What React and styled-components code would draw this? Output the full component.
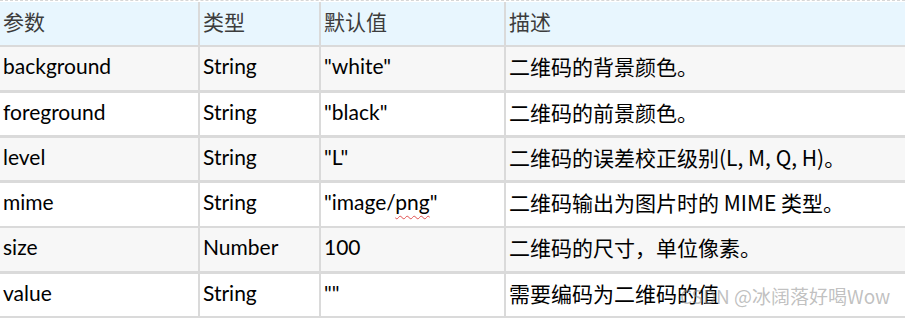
import styled, { createGlobalStyle } from "styled-components";

const GlobalStyle = createGlobalStyle`
  html, body {
    margin: 0;
    padding: 0;
    background: #ffffff;
  }
  body {
    font-family: Lato, "Noto Sans CJK SC", sans-serif;
  }
`;

const params = [
    { name: "background", type: "String", def: '"white"', desc: "二维码的背景颜色。" },
    { name: "foreground", type: "String", def: '"black"', desc: "二维码的前景颜色。" },
    { name: "level", type: "String", def: '"L"', desc: "二维码的误差校正级别(L, M, Q, H)。" },
    { name: "mime", type: "String", def: "mime", desc: "二维码输出为图片时的 MIME 类型。" },
    { name: "size", type: "Number", def: "100", desc: "二维码的尺寸，单位像素。" },
    { name: "value", type: "String", def: '""', desc: "需要编码为二维码的值" },
];

const App = () => {
    return (
        <>
            <GlobalStyle />
            <Page>
                <Table>
                    <HeadCell>参数</HeadCell>
                    <HeadCell>类型</HeadCell>
                    <HeadCell>默认值</HeadCell>
                    <HeadCell>描述</HeadCell>
                    {params.map((p, i) => (
                        <Row key={p.name} $striped={i % 2 === 0}>
                            <Cell>{p.name}</Cell>
                            <Cell>{p.type}</Cell>
                            <Cell>
                                {p.def === "mime" ? (
                                    <>"image/<Typo>png</Typo>"</>
                                ) : (
                                    p.def
                                )}
                            </Cell>
                            <Cell $cjk>{p.desc}</Cell>
                        </Row>
                    ))}
                </Table>
                <Watermark>CSDN @冰阔落好喝Wow</Watermark>
            </Page>
        </>
    );
};
export default App;

const Page = styled.div`
    position: relative;
    width: 905px;
    height: 318px;
    overflow: hidden;
    background: #ffffff;
    border-top: 1px dashed #d6d6d6;
    box-sizing: border-box;
    padding-top: 1px;
`;

const Table = styled.div`
    display: grid;
    grid-template-columns: 198px 119px 183px 1fr;
    grid-auto-rows: 42.5px;
    column-gap: 2px;
    row-gap: 2.75px;
    background: #dadada;
    padding-bottom: 3px;
`;

// rows are just a visual grouping, cells sit on the parent grid
const Row = styled.div`
    display: contents;

    & > div {
        background: ${(p) => (p.$striped ? "#f7f7f7" : "#ffffff")};
    }
`;

const Cell = styled.div`
    padding: 5px 0 0 3px;
    font-size: 21px;
    line-height: 28px;
    color: #000000;
    white-space: nowrap;
    font-family: ${(p) =>
        p.$cjk ? '"Noto Sans CJK SC", sans-serif' : 'Lato, "Noto Sans CJK SC", sans-serif'};
`;

const HeadCell = styled.div`
    background: #e8f6fe;
    padding: 5px 0 0 3px;
    font-size: 21px;
    line-height: 28px;
    color: #3c3c3c;
    font-family: "Noto Sans CJK SC", sans-serif;
`;

const Typo = styled.span`
    text-decoration: underline wavy #e05050;
    text-decoration-thickness: 1px;
    text-underline-offset: 5px;
`;

const Watermark = styled.div`
    position: absolute;
    left: 680px;
    top: 283px;
    font-size: 19px;
    line-height: 24px;
    color: rgba(140, 140, 140, 0.55);
    font-family: "Noto Sans CJK SC", sans-serif;
    white-space: nowrap;
`;
